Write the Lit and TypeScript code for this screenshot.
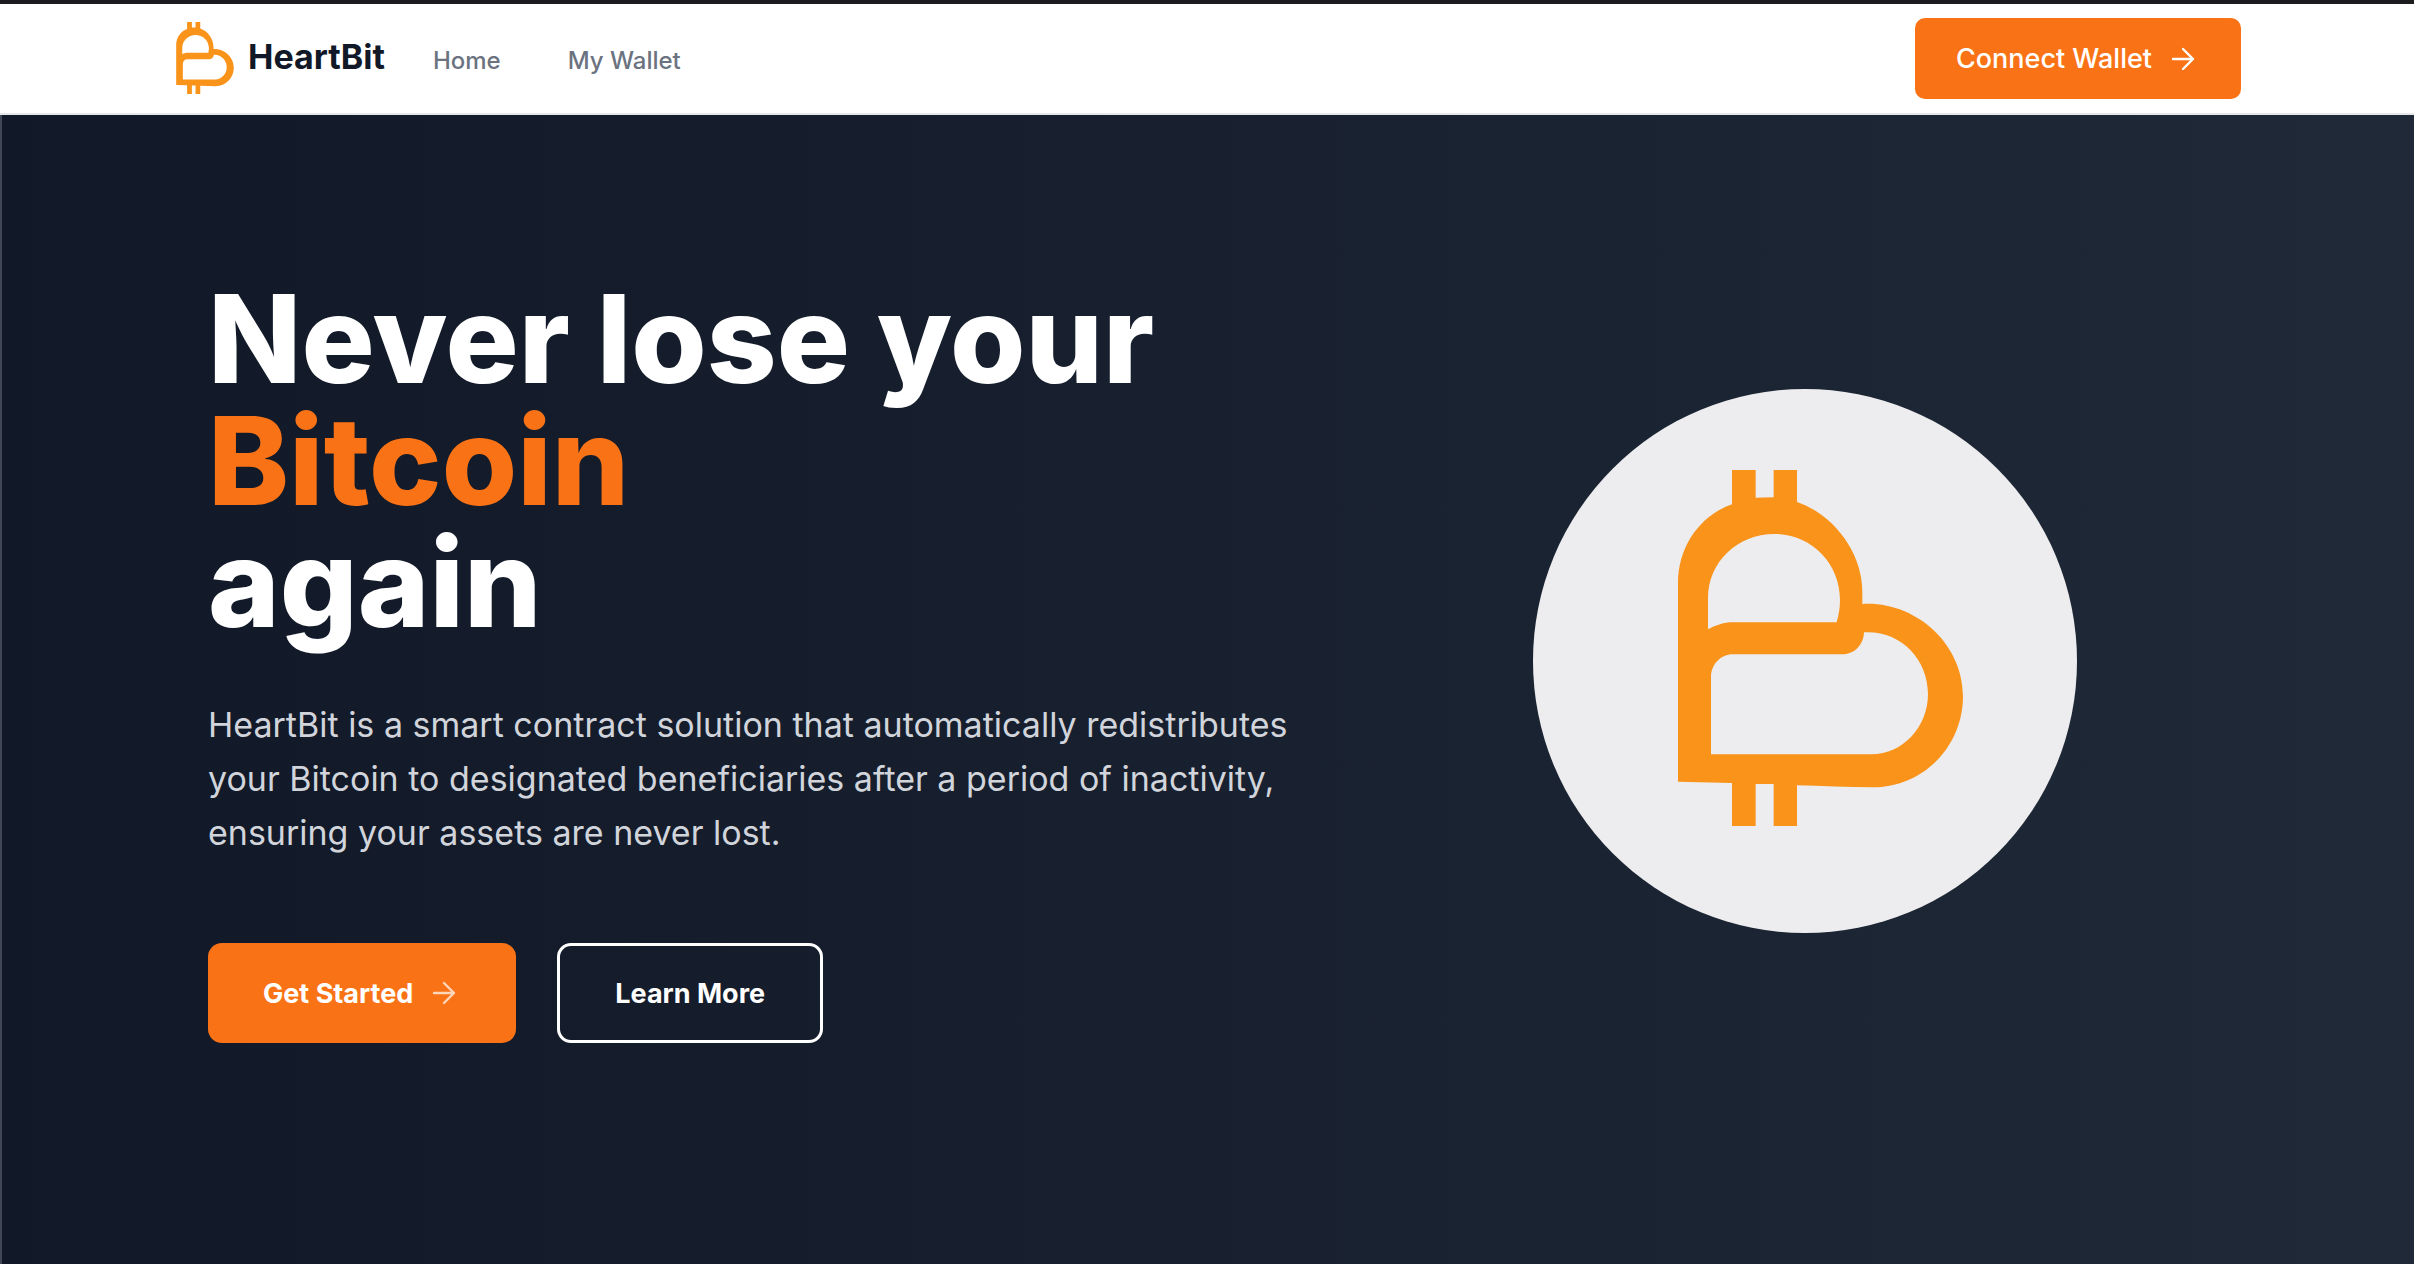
import { LitElement, html, css, svg } from "lit";
import { customElement } from "lit/decorators.js";

// Heart-shaped "B" mark, shared by the header and the hero.
const mark = svg`
  <path fill="#f9931a" fill-rule="evenodd" d="M162 0H233V83L287 82V0H357V96C470 135 553 250 553 365V402C710 392 855 520 855 678C855 830 735 952 585 952C510 952 430 948 357 946V1068H287V942H233V1068H162V939L0 935V340C0 225 70 135 162 103ZM90 478C115 465 137 457 165 457H476C482 435 486 415 486 390C486 280 400 192 288 192C180 192 90 275 90 385ZM99 853H580C675 853 750 770 750 672C750 565 665 480 558 487C557 525 528 553 495 553H165C128 553 99 583 99 622Z"/>`;

const arrow = svg`
  <path fill="none" stroke="currentColor" stroke-width="2.4" stroke-linecap="round" stroke-linejoin="round" d="M2 12H22M12 2L22 12L12 22"/>`;

@customElement("app-root")
export class AppRoot extends LitElement {
  static styles = css`
    :host {
      display: block;
      min-height: 100vh;
      background: #ffffff;
      font-family: Inter, "Liberation Sans", sans-serif;
      color: #111827;
    }
    * {
      box-sizing: border-box;
    }
    a {
      color: inherit;
      text-decoration: none;
    }
    .header {
      border-top: 4px solid #1c1c1e;
      border-bottom: 2px solid #e5e7eb;
      padding: 14px 173px;
      display: flex;
      align-items: center;
      justify-content: space-between;
    }
    .start {
      display: flex;
      align-items: center;
    }
    .logo {
      display: flex;
      padding: 0 14px 2px 3px;
    }
    .logo svg {
      width: 58px;
      height: 72px;
    }
    .menu {
      display: flex;
      align-items: baseline;
      gap: 48px;
      padding-bottom: 4px;
    }
    .brand {
      font-size: 34px;
      font-weight: 700;
    }
    .nav {
      display: flex;
      gap: 67px;
      font-size: 24px;
      font-weight: 500;
      color: #6b7280;
    }
    button {
      font-family: inherit;
      cursor: pointer;
    }
    .btn {
      display: flex;
      align-items: center;
      gap: 19px;
      border: none;
      border-radius: 10px;
      background: #f97316;
      color: #ffffff;
      font-size: 27px;
      line-height: 33px;
    }
    .btn svg {
      width: 24px;
      height: 24px;
    }
    .connect {
      font-weight: 500;
      padding: 24px 46px 24px 41px;
    }
    .hero {
      border-left: 2px solid #414754;
      background: linear-gradient(to right, #111827, #1f2937);
      padding: 163px 206px 221px;
      display: grid;
      grid-template-columns: 7fr 5fr;
      gap: 64px;
      align-items: center;
    }
    .title {
      margin: 0;
      font-size: 122px;
      line-height: 122px;
      font-weight: 800;
      color: #ffffff;
    }
    .accent {
      display: block;
      color: #f97316;
    }
    .lead {
      margin: 54px 0 0;
      font-size: 34px;
      line-height: 54px;
      color: #d1d5db;
    }
    .actions {
      margin-top: 83px;
      display: flex;
      gap: 41px;
    }
    .large {
      height: 100px;
      padding: 0 60px 0 55px;
      border-radius: 14px;
      font-weight: 700;
    }
    .outline {
      padding: 0 55px;
      border: 3px solid #ffffff;
      background: transparent;
    }
    .soft {
      opacity: 0.7;
    }
    .art {
      display: flex;
      justify-content: center;
    }
    .disc {
      width: 544px;
      height: 544px;
      border-radius: 50%;
      background: #ededef;
      display: flex;
      align-items: center;
      justify-content: center;
      padding: 0 0 26px 32px;
    }
    .disc svg {
      width: 285px;
      height: 356px;
    }
  `;

  render() {
    return html`
      <header class="header">
        <div class="start">
          <a class="logo" href="#home" aria-label="HeartBit">
            <svg viewBox="0 0 855 1068" aria-hidden="true">${mark}</svg>
          </a>
          <div class="menu">
            <a class="brand" href="#home">HeartBit</a>
            <nav class="nav">
              <a href="#home">Home</a>
              <a href="#wallet">My Wallet</a>
            </nav>
          </div>
        </div>
        <button class="btn connect" type="button">
          Connect Wallet
          <svg viewBox="0 0 24 24" aria-hidden="true">${arrow}</svg>
        </button>
      </header>
      <main class="hero">
        <div>
          <h1 class="title">
            Never lose your <span class="accent">Bitcoin</span> again
          </h1>
          <p class="lead">
            HeartBit is a smart contract solution that automatically
            redistributes your Bitcoin to designated beneficiaries after a
            period of inactivity, ensuring your assets are never lost.
          </p>
          <div class="actions">
            <button class="btn large" type="button">
              Get Started
              <svg class="soft" viewBox="0 0 24 24" aria-hidden="true">
                ${arrow}
              </svg>
            </button>
            <button class="btn large outline" type="button">Learn More</button>
          </div>
        </div>
        <div class="art">
          <div class="disc">
            <svg viewBox="0 0 855 1068" role="img" aria-label="HeartBit logo">
              ${mark}
            </svg>
          </div>
        </div>
      </main>
    `;
  }
}
